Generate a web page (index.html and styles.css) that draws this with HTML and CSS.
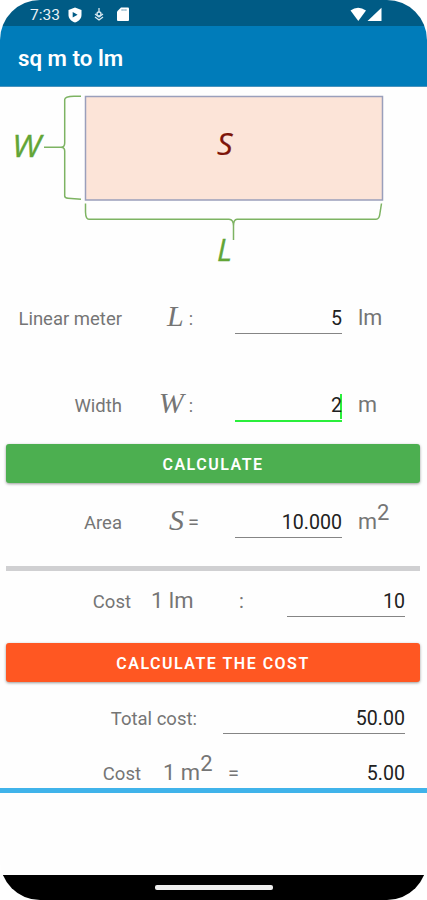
FILE: index.html
```html
<!DOCTYPE html>
<html lang="en">
<head>
    <meta charset="utf-8">
    <title>sq m to lm</title>
    <link rel="stylesheet" href="styles.css">
</head>
<body>
    <div class="phone">
        <div class="status-bar">
            <span class="time">7:33</span>
            <svg class="shield" width="14" height="16" viewBox="0 0 14 16">
                <path d="M7 0.5L13.5 3V8C13.5 11.5 11 14.2 7 15.5C3 14.2 0.5 11.5 0.5 8V3Z" fill="#fff"/>
                <path d="M4.7 5L9.6 7.7L4.7 10.4Z" fill="#005b85"/>
            </svg>
            <svg class="debug" width="10" height="13" viewBox="0 0 10 13" fill="none" stroke="#d5e6ef">
                <path d="M5 0V4M1 6L5 9L9 6M1 9L5 12L9 9" stroke-width="1.3"/>
                <circle cx="5" cy="6" r="2" stroke-width="1.4"/>
            </svg>
            <svg class="sd-card" width="12" height="15" viewBox="0 0 12 15">
                <path d="M4 0.5H11Q12 0.5 12 1.5V13Q12 14 11 14H1Q0 14 0 13V4.5Z" fill="#fff"/>
                <path d="M4.5 3H9.5" stroke="#6d9db5" stroke-width="1.4" stroke-dasharray="1.2 0.7"/>
            </svg>
            <svg class="signal" width="33" height="15" viewBox="0 0 33 15" fill="#fff">
                <path d="M0.5 3.5Q8 -2 16 3.5L8.3 14Z"/>
                <path d="M31.5 0.7V14H17.5Z"/>
            </svg>
        </div>
        <div class="app-bar">sq m to lm</div>

        <svg class="diagram" width="427" height="188" viewBox="0 87 427 188">
            <rect x="85.5" y="96.5" width="297" height="103.5" fill="#fce4d8" stroke="#9a9fbb" stroke-width="1.5"/>
            <g fill="none" stroke="#7db362" stroke-width="1.5">
                <path d="M81 96.3H74Q65 96.5 64.7 99.5V143Q64.7 147.3 61 147.3H44M61 147.3Q64.7 147.5 64.7 151V196Q64.7 198 68 198.3L81 199.3"/>
                <path d="M85.5 203.5V212Q85.7 219.3 89 219.3H229Q233.5 219.5 233.5 226V240M233.5 226Q233.5 219.5 237 219.3H376Q379.5 219.3 380 213L381.5 203.5"/>
            </g>
            <text class="side" x="12" y="156.5" textLength="29" lengthAdjust="spacingAndGlyphs">W</text>
            <text class="side" x="217" y="261">L</text>
            <text class="area" x="217" y="155">S</text>
        </svg>

        <div class="row linear">
            <span class="label">Linear meter</span>
            <span class="symbol"><i>L</i>:</span>
            <span class="field">5</span>
            <span class="unit">lm</span>
        </div>
        <div class="row width">
            <span class="label">Width</span>
            <span class="symbol"><i>W</i>:</span>
            <span class="field active">2</span>
            <span class="unit">m</span>
        </div>
        <div class="button green">CALCULATE</div>
        <div class="row result">
            <span class="label">Area</span>
            <span class="symbol equals"><i>S</i>=</span>
            <span class="field">10.000</span>
            <span class="unit">m<sup>2</sup></span>
        </div>
        <div class="divider"></div>
        <div class="row price">
            <span class="label">Cost</span>
            <span class="per">1 lm</span>
            <span class="sign">:</span>
            <span class="field">10</span>
        </div>
        <div class="button orange">CALCULATE THE COST</div>
        <div class="row total">
            <span class="label">Total cost:</span>
            <span class="field">50.00</span>
        </div>
        <div class="row square">
            <span class="label">Cost</span>
            <span class="per">1 m<sup>2</sup></span>
            <span class="sign">=</span>
            <span class="field plain">5.00</span>
        </div>
        <div class="bottom-line"></div>
        <div class="nav-bar"><div class="handle"></div></div>
    </div>
</body>
</html>
```
FILE: styles.css
```css
body {
    margin: 0;
    background: #fff;
    font-family: Roboto, sans-serif;
}
.phone {
    display: flex;
    flex-direction: column;
    width: 427px;
    height: 900px;
    overflow: hidden;
    border-radius: 40px;
    background: #fefefe;
}
.phone > * {
    flex-shrink: 0;
}
.status-bar {
    display: flex;
    align-items: center;
    box-sizing: border-box;
    height: 26px;
    padding: 3px 44px 0 30px;
    background: #005b85;
    color: #e9f1f5;
}
.time {
    width: 38px;
    font-size: 15.5px;
}
.debug {
    margin-left: 12px;
}
.sd-card {
    margin-left: 13px;
}
.signal {
    margin-left: auto;
}
.app-bar {
    height: 60px;
    padding-left: 18px;
    border-bottom: 1px solid #4a93bd;
    background: #007cba;
    color: #fff;
    font-size: 22.3px;
    font-weight: 600;
    line-height: 64px;
}
.diagram {
    display: block;
}
.side {
    fill: #62a536;
    stroke: #62a536;
    stroke-width: 0.3px;
    font: italic 31px "Open Sans", sans-serif;
}
.area {
    fill: #7d1408;
    stroke: #7d1408;
    stroke-width: 0.2px;
    font: italic 31px "Open Sans", sans-serif;
}
.row {
    display: flex;
    align-items: baseline;
    box-sizing: border-box;
    color: #757575;
    line-height: 24px;
    white-space: pre;
}
.label {
    width: 122px;
    text-align: right;
    font-size: 18.5px;
}
.symbol {
    width: 71px;
    text-align: right;
    font-size: 18px;
}
.symbol i {
    margin-right: 5px;
    font-family: "Liberation Serif", serif;
    font-size: 30px;
    line-height: 0;
    vertical-align: -1px;
}
.equals {
    width: 77px;
    font-size: 20px;
}
.equals i {
    margin-right: 4px;
}
.field {
    width: 107px;
    height: 26px;
    margin-left: 42px;
    border-bottom: 1px solid #858585;
    color: #212121;
    font-size: 19.6px;
    text-align: right;
}
.equals + .field {
    margin-left: 36px;
}
.active {
    border-bottom: 2px solid #2aef3c;
    background: linear-gradient(#2aef3c, #2aef3c) right 0 / 2px 25px no-repeat;
}
.unit {
    margin-left: 16px;
    font-size: 21.7px;
}
sup {
    font-size: 22px;
    line-height: 0;
    vertical-align: 9px;
}
.linear {
    height: 87px;
    padding-top: 31px;
}
.width {
    height: 82px;
    padding-top: 31px;
}
.button {
    height: 39px;
    margin: 0 7px 0 6px;
    border-radius: 3px;
    box-shadow: 0 1px 3px rgba(0, 0, 0, 0.4);
    color: #fff;
    font-size: 16px;
    font-weight: 600;
    letter-spacing: 1.5px;
    line-height: 41px;
    text-align: center;
}
.green {
    background: #4caf50;
}
.orange {
    background: #ff5722;
}
.result {
    height: 83px;
    padding-top: 27px;
}
.divider {
    height: 5px;
    margin: 0 7px 0 6px;
    background: #d0d0d2;
}
.price {
    height: 72px;
    padding-top: 18px;
}
.price .label {
    width: 131px;
}
.per {
    width: 88px;
    margin-left: 20px;
    font-size: 22px;
}
.sign {
    width: 48px;
    font-size: 20px;
}
.price .field {
    width: 118px;
    margin-left: 0;
}
.total {
    height: 72px;
    padding-top: 25px;
}
.total .label {
    width: 197px;
}
.total .field {
    width: 182px;
    margin-left: 26px;
}
.square {
    height: 34px;
    padding-top: 7px;
}
.square .label {
    width: 141px;
}
.square .per {
    width: 65px;
    margin-left: 22px;
}
.plain {
    width: 129px;
    margin-left: 0;
    border: 0;
}
.bottom-line {
    height: 5px;
    background: #40b3ea;
}
.nav-bar {
    display: flex;
    align-items: center;
    justify-content: center;
    height: 25px;
    margin-top: auto;
    background: #000;
}
.handle {
    width: 118px;
    height: 5px;
    border-radius: 2px;
    background: #eee;
}
```
